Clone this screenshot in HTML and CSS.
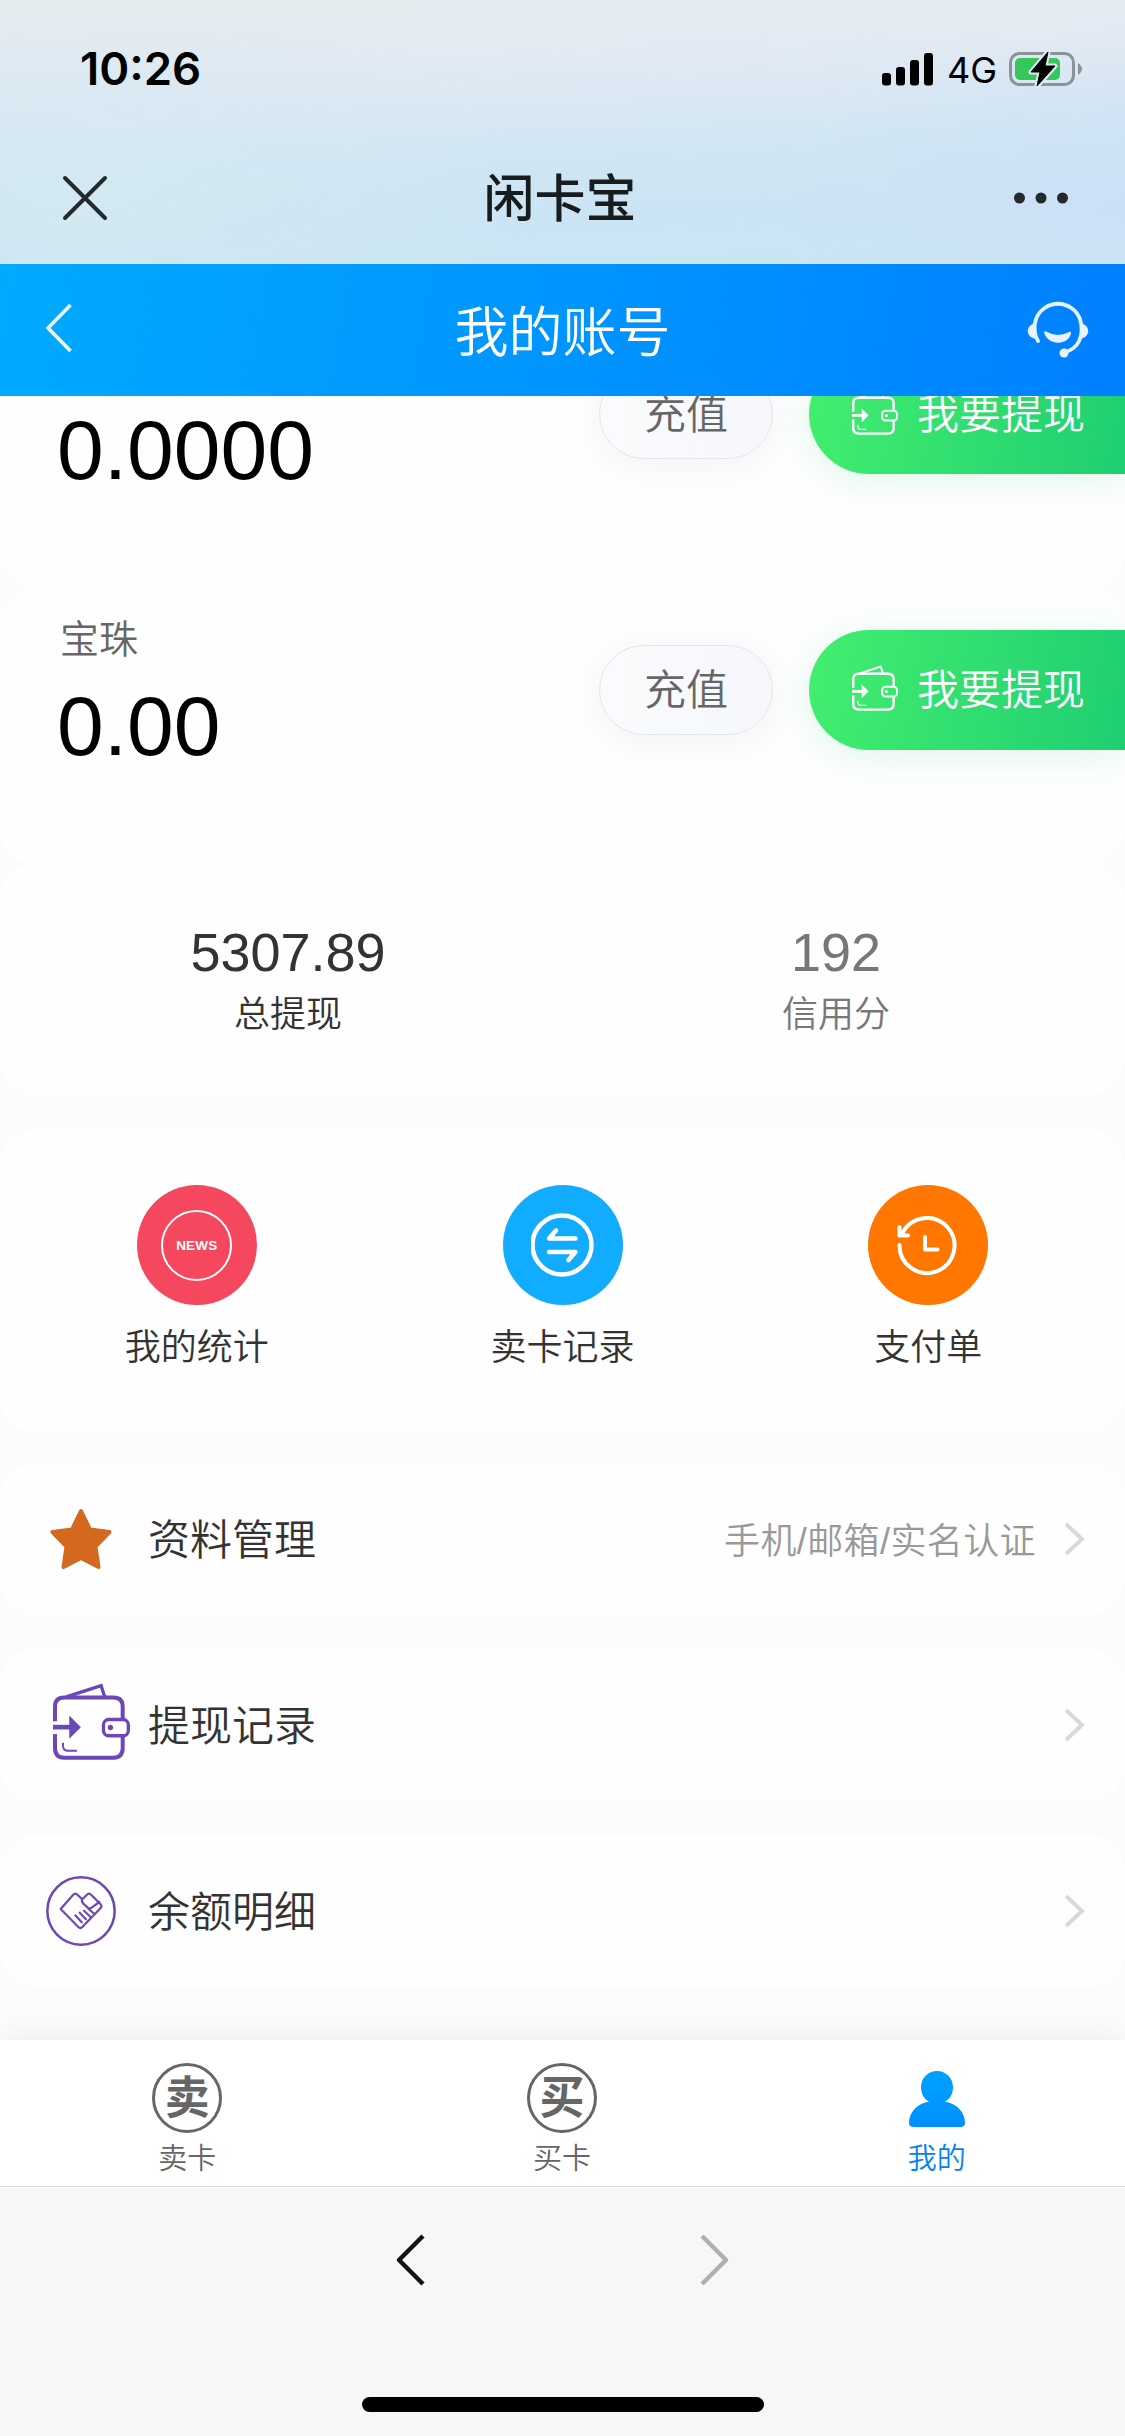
FILE: index.html
```html
<!DOCTYPE html>
<html lang="zh-CN">
<head>
<meta charset="utf-8">
<title>闲卡宝</title>
<link rel="stylesheet" href="styles.css">
</head>
<body>
<svg class="defs" width="0" height="0" aria-hidden="true">
  <symbol id="wallet" viewBox="0 0 232 232">
    <g fill="none" stroke="currentColor">
      <path stroke-width="12" d="M6 115V72Q6 44 34 44H182Q210 44 210 72V106M210 162V196Q210 225 182 225H34Q6 225 6 196V154"/>
      <path stroke-width="10" d="M40 42 145 8 156 42"/>
      <rect stroke-width="10" x="152" y="110" width="75" height="49" rx="16"/>
      <path stroke-width="14" d="M0 133H56"/>
      <path stroke-width="6" d="M30 180V188Q30 204 46 204H72"/>
    </g>
    <path fill="currentColor" d="M49 98 84 133 49 168Z"/>
    <circle fill="currentColor" cx="173" cy="134" r="8"/>
  </symbol>
  <symbol id="chevron" viewBox="0 0 24 36">
    <path d="M3 3 19 18 3 33" fill="none" stroke="#d9d9d9" stroke-width="4"/>
  </symbol>
</svg>

<header class="browser-top">
  <div class="status">
    <span class="time">10:26</span>
    <div class="status-right">
      <svg class="signal" width="51" height="33" viewBox="0 0 51 33"><rect y="20" width="9" height="12.5" rx="3"/><rect x="14" y="14" width="9" height="18.5" rx="3"/><rect x="28" y="7" width="9" height="25.5" rx="3"/><rect x="42" width="9" height="32.5" rx="3"/></svg>
      <span class="network">4G</span>
      <svg class="battery" width="74" height="38" viewBox="0 0 74 38">
        <rect x="1.5" y="3.5" width="63" height="31" rx="9" fill="none" stroke="#8b9299" stroke-width="3"/>
        <path d="M69 13q8 6 0 12z" fill="#8b9299"/>
        <rect x="6" y="8" width="45" height="22" rx="5" fill="#34c759"/>
        <path d="M39 2 22 22H31L28 36 46 16H36Z" fill="#000" stroke="#dfeaf3" stroke-width="5" stroke-linejoin="round"/>
        <path d="M39 2 22 22H31L28 36 46 16H36Z" fill="#000" stroke="#000" stroke-width="1" stroke-linejoin="round"/>
      </svg>
    </div>
  </div>
  <div class="title-row">
    <svg width="46" height="46" viewBox="0 0 46 46"><path d="M3 3 43 43M43 3 3 43" stroke="#24292c" stroke-width="4" stroke-linecap="round"/></svg>
    <h1>闲卡宝</h1>
    <svg width="56" height="12" viewBox="0 0 56 12" fill="#24292c"><circle cx="6.500" cy="6" r="5.500"/><circle cx="28" cy="6" r="5.500"/><circle cx="49.500" cy="6" r="5.500"/></svg>
  </div>
</header>

<nav class="page-nav">
  <svg class="back" width="28" height="50" viewBox="0 0 28 50"><path d="M25.500 2 3 25 25.500 48" fill="none" stroke="#f0f8ff" stroke-width="3.600"/></svg>
  <h2>我的账号</h2>
  <svg class="headset" width="63" height="58" viewBox="0 0 63 58">
    <path d="M11 40C8 35 6 26 9 18A23.500 23.500 0 0 1 53 18C58 35 51 48 38 51" fill="none" stroke="#e5f3ff" stroke-width="3.800" stroke-linecap="round"/>
    <path d="M9 22C-2 24-2 36 9 38ZM53 22C64 24 64 36 53 38Z" fill="#e5f3ff"/>
    <circle cx="37" cy="52" r="4.500" fill="#e5f3ff"/>
    <path d="M17 31Q18 29.500 20 31Q31 37 42 31Q44 30 44 32C42 45 20 45 17 31Z" fill="#e5f3ff"/>
  </svg>
</nav>

<main class="content">
  <section class="card balance">
    <div class="amount"><span class="amount-name"></span><span class="amount-value">0.0000</span></div>
    <span class="recharge">充值</span>
    <span class="withdraw"><svg width="46" height="46"><use href="#wallet"/></svg><span>我要提现</span></span>
  </section>
  <section class="card balance">
    <div class="amount"><span class="amount-name">宝珠</span><span class="amount-value">0.00</span></div>
    <span class="recharge">充值</span>
    <span class="withdraw"><svg width="46" height="46"><use href="#wallet"/></svg><span>我要提现</span></span>
  </section>

  <section class="card stats">
    <div class="stat"><b>5307.89</b><span>总提现</span></div>
    <div class="stat muted"><b>192</b><span>信用分</span></div>
  </section>

  <section class="card shortcuts">
    <div class="shortcut">
      <i class="disc red"><em class="news">NEWS</em></i>
      <span>我的统计</span>
    </div>
    <div class="shortcut">
      <i class="disc blue"><svg width="64" height="64" viewBox="0 0 64 64" fill="none" stroke="#fff" stroke-linecap="round" stroke-linejoin="round"><circle cx="31" cy="32" r="29.500" stroke-width="4.500"/><path stroke-width="4.500" d="M44.500 25.500H18L25 17.500M18 39H44.500L37.500 47"/></svg></i>
      <span>卖卡记录</span>
    </div>
    <div class="shortcut">
      <i class="disc orange"><svg width="64" height="64" viewBox="0 0 64 64" fill="none" stroke="#fff" stroke-width="4" stroke-linecap="round" stroke-linejoin="round"><path d="M3.500 32A27.500 27.500 0 1 0 6.500 20M3.500 14V22.500H12M29 24V36.500H41.500"/></svg></i>
      <span>支付单</span>
    </div>
  </section>

  <section class="card row">
    <span class="row-icon"><svg width="64" height="64" viewBox="0 0 64 64"><path d="M32 4 41 22.500 60.500 25 46.500 39.500 49.500 60 32 51 14.500 60 17.500 39.500 3.500 25 23 22.500Z" fill="#d2691e" stroke="#d2691e" stroke-width="4" stroke-linejoin="round"/></svg></span>
    <span class="row-name">资料管理</span>
    <span class="row-note">手机/邮箱/实名认证</span>
    <svg width="24" height="36"><use href="#chevron"/></svg>
  </section>
  <section class="card row">
    <span class="row-icon purple wide"><svg width="77" height="77"><use href="#wallet"/></svg></span>
    <span class="row-name">提现记录</span>
    <svg width="24" height="36"><use href="#chevron"/></svg>
  </section>
  <section class="card row">
    <span class="row-icon purple"><svg width="70" height="70" viewBox="0 0 210 210" fill="none" stroke="currentColor" stroke-width="7.500" stroke-linecap="round" stroke-linejoin="round"><circle cx="105" cy="105" r="101"/><path stroke-width="6.500" d="M44 99 81 57Q88 49 95 57L109 70 122 57Q129 49 136 57L164 85Q169 91 164 96L109 153Q103 159 97 153L44 99ZM109 70Q105 77 112 83L125 95Q132 100 138 94L160 78M88 118 107 139M101 110 120 130M114 104 133 122M127 98 145 114"/></svg></span>
    <span class="row-name">余额明细</span>
    <svg width="24" height="36"><use href="#chevron"/></svg>
  </section>
</main>

<nav class="tabs">
  <div class="tab"><i class="seal">卖</i><span>卖卡</span></div>
  <div class="tab"><i class="seal">买</i><span>买卡</span></div>
  <div class="tab active">
    <svg width="70" height="70" viewBox="0 0 70 70"><defs><linearGradient id="p" x2="0" y2="1"><stop stop-color="#00a2ff"/><stop offset="1" stop-color="#0090ff"/></linearGradient></defs><path d="M35 8C44 8 51 15 51 24C51 31 48 36 43 38.500C56 41 63 50 63 60Q63 64 58 64H12Q7 64 7 60C7 50 14 41 27 38.500C22 36 19 31 19 24C19 15 26 8 35 8Z" fill="url(#p)"/></svg>
    <span>我的</span>
  </div>
</nav>

<footer class="browser-bottom">
  <div class="history">
    <svg width="32" height="54" viewBox="0 0 32 54"><path d="M28 3 4 27 28 51" fill="none" stroke="#141414" stroke-width="4.500" stroke-linejoin="round"/></svg>
    <svg width="32" height="54" viewBox="0 0 32 54"><path d="M4 3 28 27 4 51" fill="none" stroke="#b0b0b0" stroke-width="4.500" stroke-linejoin="round"/></svg>
  </div>
  <div class="home"></div>
</footer>
</body>
</html>
```
FILE: styles.css
```css
* { box-sizing: border-box; }

body {
  margin: 0;
  width: 1125px;
  height: 2436px;
  display: flex;
  flex-direction: column;
  overflow: hidden;
  background: #fcfcfd;
  color: #333;
  font-family: "Liberation Sans", "Noto Sans CJK SC", sans-serif;
}

svg { display: block; flex: none; }
.defs { position: absolute; }
h1, h2 { margin: 0; }
i, em { font-style: normal; }

/* browser chrome, top */
.browser-top {
  height: 264px;
  flex: none;
  background:
    radial-gradient(ellipse 340px 180px at 100% 82%, rgba(205, 223, 247, .7), rgba(205, 223, 247, 0)),
    radial-gradient(ellipse 460px 220px at 8% 75%, rgba(213, 234, 242, .7), rgba(213, 234, 242, 0)),
    linear-gradient(178deg, #e6edee 0%, #e4eaf2 20%, #dbe8f3 38%, #cfe6f4 58%, #cbe4f3 78%, #c9e7f3 100%);
}

.status {
  height: 138px;
  padding: 0 42px 0 80px;
  display: flex;
  justify-content: space-between;
  align-items: center;
  color: #000;
}
.time { font: 600 45.500px/1 Inter, sans-serif; }
.status-right { display: flex; align-items: center; }
.network { font: 400 36px/1 Inter, sans-serif; margin: 2px 12px 0 14px; }

.title-row {
  height: 120px;
  padding: 0 56px 0 62px;
  display: flex;
  justify-content: space-between;
  align-items: center;
}
.title-row h1 {
  font-size: 51px;
  font-weight: 500;
  line-height: 1;
  color: #171c1f;
  margin: 2px 0 0 -1px;
}

/* page header */
.page-nav {
  height: 132px;
  flex: none;
  padding: 0 35px 0 45px;
  display: flex;
  justify-content: space-between;
  align-items: center;
  background: linear-gradient(100deg, #00aaff, #0080ff);
  color: #fff;
}
.page-nav h2 { font-size: 54px; font-weight: 350; line-height: 1; margin: 5px 0 0 25px; }
.page-nav .back { margin-bottom: 5px; }

/* scrolled content */
.content {
  height: 1644px;
  flex: none;
  overflow: hidden;
  display: flex;
  flex-direction: column;
}
.card { flex: none; background: #fefefe; border-radius: 36px; }

.balance {
  height: 276px;
  padding: 0 0 72px 57px;
  display: flex;
  align-items: center;
}
.balance:first-child { margin-top: -84px; }
.amount { flex: 1; display: flex; flex-direction: column; padding-top: 13px; }
.amount-name { height: 42px; padding-left: 3px; font-size: 39px; line-height: 42px; font-weight: 350; color: #666; }
.amount-value { font-size: 84px; line-height: 96px; margin-top: 17px; color: #000; }
.recharge {
  width: 174px;
  height: 90px;
  border: 1.500px solid #e1e5ee;
  border-radius: 45px;
  background: linear-gradient(90deg, #fafbfd, #f5f7fb);
  box-shadow: 0 6px 36px rgba(0, 0, 0, .05);
  color: #666;
  font-size: 42px;
  font-weight: 350;
  line-height: 90px;
  text-align: center;
}
.withdraw {
  width: 316px;
  height: 120px;
  margin-left: 36px;
  padding-left: 43px;
  display: flex;
  align-items: center;
  gap: 19px;
  border-radius: 60px 0 0 60px;
  background: linear-gradient(100deg, #43ef6f, #1fce71);
  box-shadow: 0 6px 36px rgba(31, 206, 113, .14);
  color: #fff;
  font-size: 42px;
  line-height: 60px;
}
.withdraw span { margin-top: 1px; font-weight: 350; }
.withdraw svg { margin-bottom: 5px; }

.stats {
  height: 231px;
  margin-bottom: 35px;
  padding: 60px 15px 0 14px;
  display: flex;
}
.stat { flex: 1; text-align: center; display: flex; flex-direction: column; }
.stat b { font-size: 54px; line-height: 56px; font-weight: 400; }
.stat span { font-size: 36px; line-height: 54px; margin-top: 8px; font-weight: 350; }
.stat.muted { color: #777; }

.shortcuts {
  height: 302px;
  margin-bottom: 31px;
  padding: 55px 14px 0;
  display: flex;
}
.shortcut { flex: 1; display: flex; flex-direction: column; align-items: center; font-size: 36px; line-height: 54px; font-weight: 350; }
.shortcut span { margin-top: 16px; }
.disc { width: 120px; height: 120px; border-radius: 50%; display: flex; align-items: center; justify-content: center; }
.red { background: #f5475d; }
.blue { background: #12acff; }
.orange { background: #ff7700; }
.news {
  width: 71px;
  height: 71px;
  border: 2px solid #fff;
  border-radius: 50%;
  color: #fff;
  font-size: 13.500px;
  letter-spacing: .2px;
  font-weight: 700;
  line-height: 67px;
  text-align: center;
}

.row {
  height: 152px;
  margin-bottom: 34px;
  padding: 0 38px 0 46px;
  display: flex;
  align-items: center;
}
.row-icon { width: 70px; display: flex; justify-content: center; }
.row-icon.wide { justify-content: flex-start; padding-left: 7px; padding-bottom: 7px; }
.purple { color: #6c47b8; }
.row-name { margin: 3px 0 0 32px; flex: 1; font-size: 42px; line-height: 60px; font-weight: 350; }
.row-note { margin: 5px 27px 0 0; font-size: 36px; letter-spacing: .4px; line-height: 54px; color: #999; font-weight: 350; }

/* bottom tab bar */
.tabs {
  height: 147px;
  flex: none;
  position: relative;
  padding: 23px 1px 0 0;
  display: flex;
  background: #fff;
  border-bottom: 1px solid #dcdcdc;
  box-shadow: 0 -2px 30px rgba(0, 0, 0, .07);
}
.tab { flex: 1; display: flex; flex-direction: column; align-items: center; font-size: 29px; line-height: 40px; color: #666; font-weight: 350; }
.tab span { margin-top: 6px; }
.seal {
  width: 70px;
  height: 70px;
  border: 3.500px solid #666;
  border-radius: 50%;
  font-size: 45px;
  font-weight: 700;
  line-height: 66px;
  text-align: center;
}
.tab.active { color: #0083f5; }

/* browser chrome, bottom */
.browser-bottom {
  flex: 1;
  position: relative;
  background: #f7f7f7;
  display: flex;
  flex-direction: column;
  align-items: center;
  justify-content: space-between;
  padding: 46px 0 24px;
}
.history { width: 335px; display: flex; justify-content: space-between; }
.home { width: 402px; height: 15px; border-radius: 7.500px; background: #000; }
```
